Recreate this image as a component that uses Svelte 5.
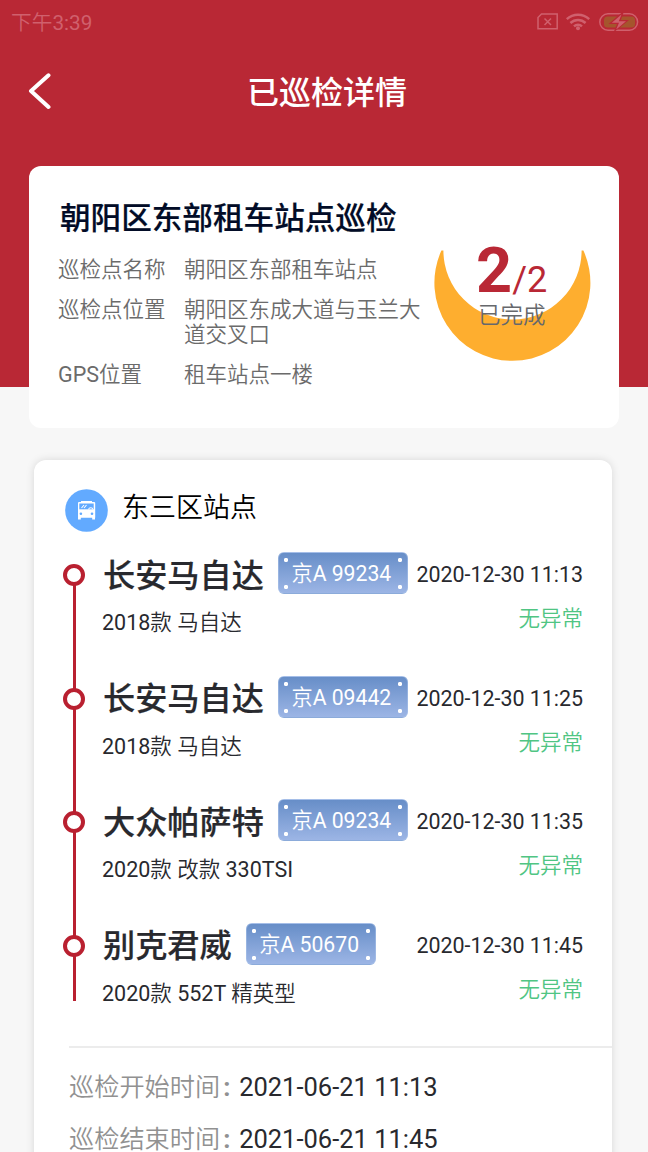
<script>
	const info = [
		{ label: '巡检点名称', value: '朝阳区东部租车站点' },
		{ label: '巡检点位置', value: '朝阳区东成大道与玉兰大道交叉口' },
		{ label: 'GPS位置', value: '租车站点一楼' }
	];

	const cars = [
		{ name: '长安马自达', plate: '京A 99234', model: '2018款 马自达', time: '2020-12-30 11:13' },
		{ name: '长安马自达', plate: '京A 09442', model: '2018款 马自达', time: '2020-12-30 11:25' },
		{ name: '大众帕萨特', plate: '京A 09234', model: '2020款 改款 330TSI', time: '2020-12-30 11:35' },
		{ name: '别克君威', plate: '京A 50670', model: '2020款 552T 精英型', time: '2020-12-30 11:45' }
	];

	const times = [
		{ label: '巡检开始时间', value: '2021-06-21 11:13' },
		{ label: '巡检结束时间', value: '2021-06-21 11:45' }
	];
</script>

<div class="page">
	<div class="hero">
		<div class="status-bar">
			<span>下午3:39</span>
			<svg width="104" height="22" viewBox="0 0 104 22" fill="none">
				<g stroke="#d0606d" stroke-width="1.5">
					<path d="M5.500 3H21.200V17.800H2V6.500Z" />
					<path d="M8.500 7.500l6.500 6.500M15 7.500l-6.500 6.500" />
				</g>
				<g stroke="#d0606d" stroke-width="2.500">
					<path d="M30.800 8.200A16.500 16.500 0 0 1 53.200 8.200" />
					<path d="M34.400 12A11 11 0 0 1 49.600 12" />
					<path d="M38 15.400A6 6 0 0 1 46 15.400" />
				</g>
				<circle cx="42" cy="17.300" r="2" fill="#d0606d" />
				<rect x="63.800" y="2.800" width="37.800" height="16.400" rx="8.200" stroke="#d0606d" stroke-width="1.500" />
				<rect x="68" y="5.500" width="31" height="11" rx="3.500" fill="#a5552d" />
				<path d="M87 .5L72.500 13H81L77.500 21.500L93 9H84.800L88 .5Z" fill="#b92835" />
				<path d="M85.500 3.500L75.800 11.800H83L80.200 18.500L90 10.200H82.800Z" fill="#d0606d" />
			</svg>
		</div>
		<div class="nav">
			<svg class="back" width="24" height="40" viewBox="0 0 24 40" fill="none">
				<path d="M21.500 4.300L4 20L21.500 36" stroke="#fff" stroke-width="4" stroke-linecap="round" stroke-linejoin="round" />
			</svg>
			<h1>已巡检详情</h1>
		</div>
	</div>

	<div class="card summary">
		<div class="detail">
			<h2>朝阳区东部租车站点巡检</h2>
			{#each info as item}
				<div class="info-row">
					<span class="label">{item.label}</span>
					<span class="value">{item.value}</span>
				</div>
			{/each}
		</div>
		<div class="progress">
			<svg width="158" height="112" viewBox="0 0 158 112">
				<path d="M7.400 .500A78 78 0 1 0 149.400 .500L147.600 .500A69.100 69.100 0 0 1 9.400 .500Z" fill="#feae2f" />
			</svg>
			<div class="count"><b>2</b>/2</div>
			<div class="done">已完成</div>
		</div>
	</div>

	<div class="card station">
		<div class="station-head">
			<svg width="43" height="43" viewBox="0 0 43 43">
				<circle cx="21.500" cy="21.500" r="21.300" fill="#62aaff" />
				<path d="M16 12h11v1H29.500l.700.700V28.800H30v1.700h-2.800v-1.700H15.800v1.700H13v-1.700V13.700l.700-.700H16Z" fill="#fff" />
				<path d="M14.300 14.500H28.700V20.300H14.300Z" fill="#62aaff" />
				<path d="M16.500 19l2.500-3M19 19l2.500-3M23.500 20.500a2.300 2.300 0 0 1 4.500 0" stroke="#fff" stroke-width="1.100" fill="none" />
				<circle cx="15.900" cy="24.700" r="1.300" fill="#62aaff" />
				<circle cx="27" cy="24.700" r="1.300" fill="#62aaff" />
			</svg>
			<span>东三区站点</span>
		</div>

		<div class="timeline">
			{#each cars as car}
				<div class="stop">
					<div class="rail"><i></i></div>
					<div class="stop-body">
						<div class="line">
							<b class="name">{car.name}</b>
							<span class="plate">{car.plate}</span>
							<span class="time">{car.time}</span>
						</div>
						<div class="line second">
							<span class="model">{car.model}</span>
							<span class="state">无异常</span>
						</div>
					</div>
				</div>
			{/each}
		</div>

		<div class="times">
			{#each times as t}
				<div class="time-row"><span>{t.label}</span><em>:</em>{t.value}</div>
			{/each}
		</div>
	</div>
</div>

<style>
	:global(body) {
		overflow: hidden;
	}
	.page {
		height: 1152px;
		overflow: hidden;
		background: #f7f7f7;
		font-family: Roboto, 'Noto Sans CJK SC DemiLight', 'Noto Sans CJK SC', sans-serif;
		font-size: 21.5px;
		color: #28292e;
	}
	h1, h2 {
		margin: 0;
		font-family: Roboto, 'Noto Sans CJK SC', sans-serif;
		font-weight: 500;
		white-space: nowrap;
	}
	svg {
		display: block;
		flex: none;
	}
	.hero {
		height: 387px;
		background: #b92835;
	}
	.status-bar {
		display: flex;
		justify-content: space-between;
		align-items: center;
		height: 44px;
		padding: 0 8px 0 11px;
		line-height: 40px;
		color: #d0606d;
	}
	.status-bar span {
		margin-top: 1px;
		font-size: 20.700px;
	}
	.nav {
		display: flex;
		align-items: center;
		height: 94px;
		padding-left: 27px;
	}
	.nav h1 {
		margin: -2px 0 0 196px;
		font-size: 32px;
		color: #fff;
	}
	.card {
		background: #fff;
		border-radius: 12px;
		box-sizing: border-box;
	}
	.summary {
		display: flex;
		width: 590px;
		height: 262px;
		margin: -221px 0 0 29px;
		padding: 33px 0 0 29px;
	}
	.detail {
		width: 376px;
		color: #6b6b6b;
	}
	.summary h2 {
		margin: 0 0 18px 2px;
		font-size: 30.600px;
		line-height: 40px;
		-webkit-text-stroke: 0.200px;
		color: #020c27;
	}
	.info-row {
		display: flex;
		margin-bottom: 15px;
		line-height: 25px;
	}
	.label {
		width: 126px;
		flex: none;
	}
	.value {
		width: 240px;
	}
	.progress {
		position: relative;
		width: 158px;
		margin-top: 51px;
	}
	.count {
		position: absolute;
		top: -11px;
		left: 42px;
		line-height: 64px;
		font-size: 36px;
		white-space: nowrap;
		color: #b92835;
	}
	.count b {
		font-size: 63px;
	}
	.done {
		position: absolute;
		top: 49px;
		left: 44px;
		line-height: 32px;
		font-size: 22.500px;
		color: #66686c;
	}
	.station {
		width: 578px;
		height: 760px;
		margin: 32px 0 0 34px;
		box-shadow: 0 0 9px rgba(0, 0, 0, 0.13);
	}
	.station-head {
		display: flex;
		padding: 29px 0 0 31px;
		font-size: 27px;
		line-height: 38px;
		color: #000;
	}
	.station-head span {
		margin-left: 14px;
	}
	.timeline {
		padding: 20px 29px 0 28px;
	}
	.stop {
		display: flex;
		height: 123.600px;
	}
	.rail {
		display: flex;
		flex-direction: column;
		align-items: center;
		width: 23px;
		padding-top: 12px;
		background: linear-gradient(#b92030, #b92030) 11px 0 / 3px 100% no-repeat;
	}
	.stop:first-child .rail {
		background-position: 11px 20px;
	}
	.stop:last-child .rail {
		background-size: 3px 78px;
	}
	.rail i {
		width: 14px;
		height: 14px;
		border: 4px solid #b92030;
		border-radius: 50%;
		background: #fff;
	}
	.stop-body {
		flex: 1;
		margin-left: 18px;
	}
	.line {
		display: flex;
		align-items: center;
		height: 42px;
	}
	.name {
		padding-top: 5px;
		font-family: Roboto, 'Noto Sans CJK SC', sans-serif;
		font-size: 32.200px;
		font-weight: 500;
		line-height: 42px;
		-webkit-text-stroke: 0.200px;
	}
	.plate {
		width: 130px;
		height: 42px;
		margin-left: 14.500px;
		box-sizing: border-box;
		padding-left: 12px;
		border: 1px solid rgba(175, 200, 235, 0.5);
		border-radius: 6px;
		font-size: 21.200px;
		line-height: 42px;
		white-space: nowrap;
		color: #fff;
		background:
			radial-gradient(circle at 7px 7px, #fff 1.800px, transparent 2.500px),
			radial-gradient(circle at 121px 7px, #fff 1.800px, transparent 2.500px),
			radial-gradient(circle at 7px 34px, #fff 1.800px, transparent 2.500px),
			radial-gradient(circle at 121px 34px, #fff 1.800px, transparent 2.500px),
			linear-gradient(#678ec8, #9cb5e5);
	}
	.time {
		padding-top: 3px;
		margin-left: auto;
		font-size: 21.400px;
		white-space: nowrap;
	}
	.second {
		justify-content: space-between;
		align-items: flex-start;
		line-height: 30px;
	}
	.model {
		padding-top: 14px;
		margin-left: -1px;
	}
	.state {
		padding-top: 10px;
		color: #50c583;
	}
	.times {
		margin-left: 35px;
		padding-top: 13px;
		border-top: 2px solid #ececec;
		font-size: 25.500px;
	}
	.time-row {
		height: 52px;
		line-height: 52px;
	}
	.time-row span {
		font-size: 25.200px;
		color: #919191;
	}
	.time-row em {
		display: inline-block;
		width: 19px;
		text-indent: 3px;
		font-style: normal;
		font-weight: 700;
		color: #919191;
	}
</style>
